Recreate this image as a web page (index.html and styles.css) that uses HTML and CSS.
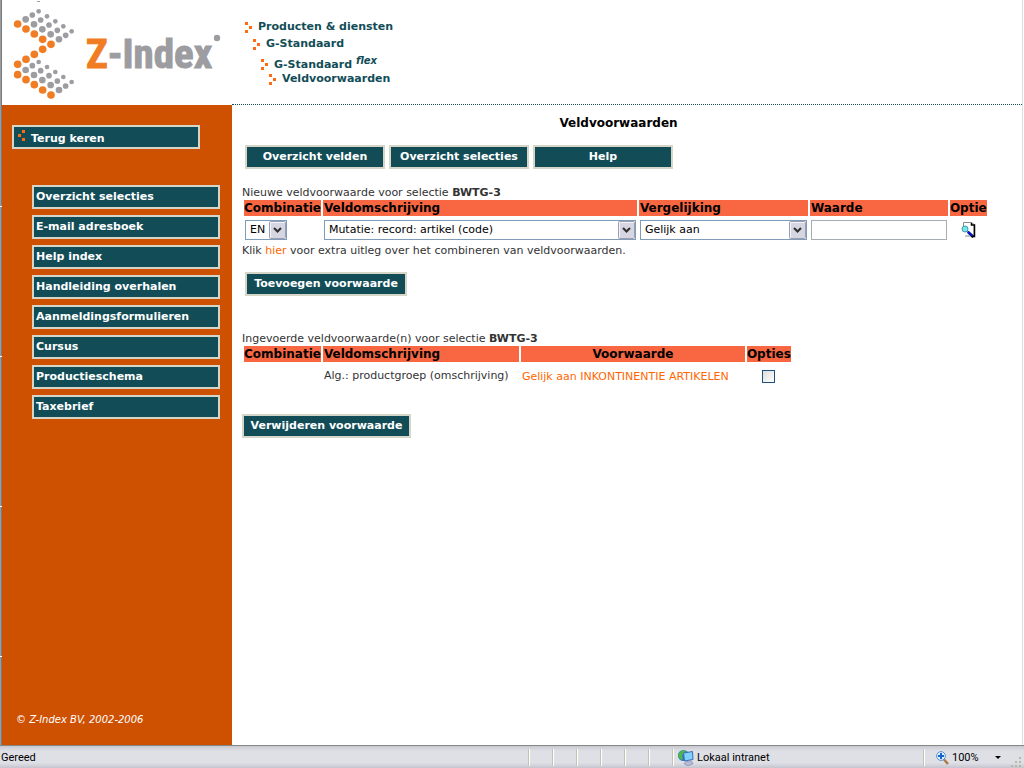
FILE: index.html
```html
<!DOCTYPE html>
<html lang="nl">
<head>
<meta charset="utf-8">
<title>Z-Index - Veldvoorwaarden</title>
<link rel="stylesheet" href="styles.css">
</head>
<body>
<svg width="0" height="0" class="defs" aria-hidden="true">
  <defs>
    <g id="dots">
      <g fill="#9c9ca1">
        <circle cx="77" cy="58" r="10"/><circle cx="102" cy="73" r="10"/><circle cx="127" cy="88" r="10"/><circle cx="152" cy="103" r="10"/><circle cx="177" cy="118" r="10"/>
        <circle cx="97" cy="45" r="8.5"/><circle cx="122" cy="60" r="8.5"/><circle cx="147" cy="75" r="8.5"/><circle cx="172" cy="91" r="8.5"/><circle cx="197" cy="106" r="8.5"/>
        <circle cx="116" cy="34" r="7"/><circle cx="141" cy="49" r="7"/><circle cx="166" cy="64" r="7"/><circle cx="190" cy="79" r="7"/><circle cx="215" cy="94" r="7"/>
      </g>
      <g fill="#f07d24">
        <circle cx="53" cy="72" r="11.5"/><circle cx="78" cy="87" r="11.5"/><circle cx="103" cy="102" r="11.5"/><circle cx="128" cy="118" r="11.5"/><circle cx="153" cy="133" r="11.5"/>
      </g>
    </g>
    <g id="bullet" fill="#ff6a13"><rect width="3" height="3"/><rect x="4" y="4" width="3" height="3"/><rect y="8" width="3" height="3"/></g>
  </defs>
</svg>
<div class="window">
  <div class="page">
    <header class="header">
      <a class="logo" href="#" aria-label="Z-Index">
        <svg width="230" height="105" viewBox="2 0 230 105">
          <g transform="scale(.3333)">
            <use href="#dots"/><use href="#dots" y="152"/>
            <g fill="#f07d24"><circle cx="128" cy="148" r="11.5"/><circle cx="103" cy="163" r="11.5"/><circle cx="78" cy="178" r="11.5"/><circle cx="53" cy="193" r="11.5"/></g>
          </g>
          <circle cx="217" cy="38" r="3.2" fill="#9c9ca1"/>
          <rect x="37" y="1" width="3" height="1" fill="#9c9ca1"/>
          <text class="logo-text" x="86" y="68"><tspan class="logo-z">Z</tspan><tspan class="logo-rest">-Index</tspan></text>
        </svg>
      </a>
      <nav class="crumbs" aria-label="Kruimelpad">
        <a href="#"><svg width="7" height="11"><use href="#bullet"/></svg>Producten &amp; diensten</a>
        <a href="#"><svg width="7" height="11"><use href="#bullet"/></svg>G-Standaard</a>
        <a class="flex-crumb" href="#"><svg width="7" height="11"><use href="#bullet"/></svg><span>G-Standaard <sup>flex</sup></span></a>
        <a class="last" href="#"><svg width="7" height="11"><use href="#bullet"/></svg>Veldvoorwaarden</a>
      </nav>
    </header>
    <div class="body">
      <aside class="sidebar">
        <a class="btn back" href="#"><svg width="7" height="11"><path fill="#ff6a13" d="M4 0h3v3H4zM0 4h3v3H0zM4 8h3v3H4z"/></svg>Terug keren</a>
        <nav class="menu">
          <a class="btn" href="#">Overzicht selecties</a>
          <a class="btn" href="#">E-mail adresboek</a>
          <a class="btn" href="#">Help index</a>
          <a class="btn" href="#">Handleiding overhalen</a>
          <a class="btn" href="#">Aanmeldingsformulieren</a>
          <a class="btn" href="#">Cursus</a>
          <a class="btn" href="#">Productieschema</a>
          <a class="btn" href="#">Taxebrief</a>
        </nav>
        <p class="copyright">© Z-Index BV, 2002-2006</p>
      </aside>
      <main class="main">
        <h1>Veldvoorwaarden</h1>
        <div class="toolbar">
          <button class="btn" type="button">Overzicht velden</button>
          <button class="btn" type="button">Overzicht selecties</button>
          <button class="btn" type="button">Help</button>
        </div>
        <form class="new-rule">
          <p>Nieuwe veldvoorwaarde voor selectie <b>BWTG-3</b></p>
          <table>
            <thead><tr><th>Combinatie</th><th>Veldomschrijving</th><th>Vergelijking</th><th>Waarde</th><th>Optie</th></tr></thead>
            <tbody><tr>
              <td><select class="s-comb" aria-label="Combinatie"><option>EN</option><option>OF</option></select></td>
              <td><select class="s-field" aria-label="Veldomschrijving"><option>Mutatie: record: artikel (code)</option></select></td>
              <td><select class="s-comp" aria-label="Vergelijking"><option>Gelijk aan</option></select></td>
              <td><input class="value" type="text" aria-label="Waarde"></td>
              <td class="center"><button class="lookup" type="button" aria-label="Zoeken"><svg width="15" height="16" viewBox="0 0 15 16">
                <path d="M2.500 5V.5H11l2 2V14H4" fill="#fff" stroke="#8a8a8a"/>
                <path d="M10.500 1v2h3V14.500H10" fill="none" stroke="#000" stroke-width="1.500"/>
                <path d="M7 10l5.500 5" stroke="#000" stroke-width="2.500"/><path d="M6.500 9.500l5 4.500" stroke="#0018e8" stroke-width="1.800"/>
                <circle cx="4" cy="7" r="3" fill="#6fe9ee" stroke="#489aa5"/>
              </svg></button></td>
            </tr></tbody>
          </table>
          <p>Klik <a href="#">hier</a> voor extra uitleg over het combineren van veldvoorwaarden.</p>
          <button class="btn add" type="button">Toevoegen voorwaarde</button>
        </form>
        <form class="rules">
          <p>Ingevoerde veldvoorwaarde(n) voor selectie <b>BWTG-3</b></p>
          <table>
            <thead><tr><th>Combinatie</th><th class="c-field">Veldomschrijving</th><th class="c-rule center">Voorwaarde</th><th>Opties</th></tr></thead>
            <tbody><tr>
              <td></td><td>Alg.: productgroep (omschrijving)</td><td><a href="#">Gelijk aan INKONTINENTIE ARTIKELEN</a></td>
              <td class="center"><input type="checkbox" aria-label="Selecteer voorwaarde"></td>
            </tr></tbody>
          </table>
          <button class="btn remove" type="button">Verwijderen voorwaarde</button>
        </form>
      </main>
    </div>
  </div>
  <footer class="status">
    <span class="ready">Gereed</span>
    <i></i><i></i><i></i><i></i><i></i><i></i>
    <span class="zone"><svg width="16" height="16" viewBox="0 0 16 16">
      <circle cx="5.500" cy="5.500" r="5.500" fill="#2f6fd0"/><path d="M1 3Q4-1 8 1L7 4 4 5 5 9 3 10Q-1 7 1 3z" fill="#4db848"/>
      <path d="M5.500 3l9-1.500 .5 8-8.500 1.500z" fill="#7fd0fa" stroke="#3b6cb5"/><path d="M8 11.500l5-1 2 3-5 2.500-4-2.500z" fill="#b9bcd8" stroke="#7f84ad" stroke-width=".7"/>
    </svg>Lokaal intranet</span>
    <span class="zoom"><svg width="13" height="14" viewBox="0 0 13 14">
      <path d="M8 8.500l4 4.500" stroke="#b07a48" stroke-width="2.500"/><circle cx="5" cy="5" r="4.400" fill="#dff0ff" stroke="#5b8fce"/><path d="M5 2v6M2 5h6" stroke="#1565c8" stroke-width="2"/>
    </svg>100%<svg class="caret" width="6" height="3"><path d="M0 0h6L3 3z"/></svg></span>
    <svg class="grip" width="11" height="11" fill="#b9b6a3"><path d="M8 0h2v2H8zM4 4h2v2H4zM8 4h2v2H8zM0 8h2v2H0zM4 8h2v2H4zM8 8h2v2H8z"/></svg>
  </footer>
</div>
</body>
</html>
```
FILE: styles.css
```css
* { box-sizing: border-box; }

body {
  margin: 0;
  background: #fff;
  color: #333;
  font: 11px/15px Verdana, "DejaVu Sans", sans-serif;
}

a { color: #ff6600; text-decoration: none; }
p, h1 { margin: 0; }
.defs { position: absolute; }

.window {
  display: flex;
  flex-direction: column;
  min-height: 100vh;
}

.page {
  flex: 1;
  display: flex;
  flex-direction: column;
  margin-right: 1px;
  border-right: 1px solid #dedede;
  padding-left: 2px;
  background: linear-gradient(#fff, #fff) 0 206px / 2px 1px no-repeat,
    linear-gradient(#fff, #fff) 0 356px / 2px 1px no-repeat,
    linear-gradient(#fff, #fff) 0 506px / 2px 1px no-repeat,
    linear-gradient(#fff, #fff) 0 656px / 2px 1px no-repeat,
    linear-gradient(90deg, #9a9da0 1px, #777b80 1px, #777b80 2px, #fff 2px);
}

.header { display: flex; height: 105px; }
.logo { flex: none; width: 230px; }
.logo svg { display: block; }
.logo-text { font: bold 41px "Liberation Sans Narrow", "Roboto Condensed", "Liberation Sans", sans-serif; }
.logo-z { fill: #f07d24; stroke: #f07d24; }
.logo-rest { fill: #9c9ca1; stroke: #9c9ca1; }

.crumbs {
  flex: 1;
  display: flex;
  flex-direction: column;
  padding: 18px 0 0 13px;
  border-bottom: 1px dotted #124d57;
}
.crumbs a {
  display: flex;
  gap: 6px;
  align-items: center;
  height: 17px;
  color: #124d57;
  font-weight: bold;
}
.crumbs svg { margin-top: 2px; }
.crumbs a:nth-child(2) { padding-left: 8px; }
.crumbs .flex-crumb { height: 20px; padding: 4px 0 0 16px; }
.crumbs .flex-crumb svg { margin-top: 0; }
.crumbs .last { height: 12px; padding-left: 24px; }
.crumbs sup { font-size: 10px; line-height: 0; font-style: italic; vertical-align: 4px; }

.body { flex: 1; display: flex; }

.sidebar {
  flex: none;
  display: flex;
  flex-direction: column;
  width: 230px;
  padding: 20px 12px 18px 10px;
  background: #ce5102;
}

.btn {
  display: block;
  height: 24px;
  padding: 1px 2px;
  border: 2px solid #d6d6c8;
  background: #124d57;
  color: #fff;
  font: bold 11px/18px Verdana, "DejaVu Sans", sans-serif;
  white-space: nowrap;
}

.back { display: flex; gap: 6px; width: 188px; padding: 2px 4px 0; line-height: 20px; }
.back svg { margin-top: 1px; }
.menu { display: grid; gap: 6px; margin: 36px 0 0 20px; }

.copyright {
  margin: auto 0 0 4px;
  color: #fff;
  font-size: 10px;
  font-style: italic;
}

.main { flex: 1; padding: 10px 27px 0 10px; }
h1 { color: #000; font-size: 12px; line-height: 16px; text-align: center; }
.toolbar { display: flex; gap: 4px; padding: 14px 3px 0; }
.toolbar .btn { width: 140px; text-align: center; }
.new-rule { padding-top: 16px; }
.rules { padding-top: 35px; }
.add { min-width: 162px; margin: 14px 3px 0; }
.remove { min-width: 169px; margin-top: 25px; }

table { border-spacing: 2px 0; }
th {
  padding: 0 1px;
  background: #f86642;
  color: #000;
  font-size: 12px;
  line-height: 16px;
  text-align: left;
  white-space: nowrap;
}
th:first-child, th:last-child { padding: 0; }
.c-field { width: 196px; }
.c-rule { width: 224px; }
td { padding: 3px 1px; height: 27px; white-space: nowrap; }
.center { text-align: center; }
td > * { vertical-align: middle; }

select, .value {
  display: block;
  height: 20px;
  margin: 0;
  border: 1px solid #7f9db9;
  border-radius: 0;
  padding: 0 18px 0 4px;
  background: #fff;
  color: #000;
  font: 11px Verdana, "DejaVu Sans", sans-serif;
}
select {
  appearance: none;
  background: url("data:image/svg+xml,%3Csvg xmlns='http://www.w3.org/2000/svg' width='17' height='18'%3E%3Crect x='.5' y='.5' width='16' height='17' rx='1' fill='%23d5d6e2' stroke='%239b9eb2'/%3E%3Cpath d='M1.5 16.500v-15h14' fill='none' stroke='%23f4f4fa'/%3E%3Cpath d='M5 7l3.500 3.500L12 7' fill='none' stroke='%23333' stroke-width='2.200'/%3E%3C/svg%3E") right center no-repeat #fff;
}
.s-comb { width: 42px; }
.s-field { width: 312px; }
.s-comp { width: 167px; }
.value { width: 136px; padding: 0 4px; border-color: #a5acb2; }
.lookup { padding: 0; border: 0; background: none; }
.lookup svg { display: block; }

input[type="checkbox"] {
  appearance: none;
  width: 13px;
  height: 13px;
  margin: 0;
  border: 1px solid #1c5180;
  background: linear-gradient(135deg, #dcdcd7, #fff);
}

.status {
  display: flex;
  align-items: center;
  height: 23px;
  padding: 1px 2px 0 1px;
  border-top: 1px solid #858884;
  background: linear-gradient(#c8c9d0, #dfe0e6 5px, #dfe0e6 17px, #c3c4ce);
  color: #000;
  font: 11px/14px Tahoma, Roboto, sans-serif;
}
.ready { flex: 1; }
.status i { width: 24px; height: 17px; border-left: 1px solid #c5c2ae; box-shadow: inset 1px 0 #fff; }
.zone, .zoom {
  display: flex;
  align-items: center;
  gap: 3px;
  height: 17px;
  padding-left: 5px;
  border-left: 1px solid #c5c2ae;
  box-shadow: inset 1px 0 #fff;
}
.zone { width: 251px; }
.zoom { width: 88px; padding-left: 12px; }
.caret { margin-left: 13px; }
.grip { align-self: flex-end; }
```
